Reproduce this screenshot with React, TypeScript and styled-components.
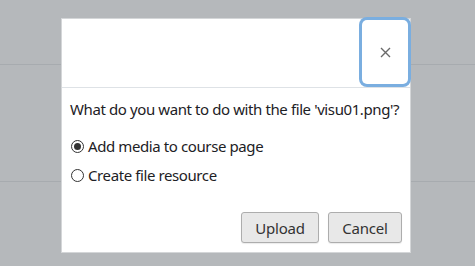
import React, { useState } from "react";
import styled, { createGlobalStyle } from "styled-components";

const Global = createGlobalStyle`
  html, body { margin: 0; padding: 0; }
  body { width: 475px; height: 266px; overflow: hidden; background: #b5b8bb; font-family: "Noto Sans", "Open Sans", sans-serif; }
`;

const Page = styled.div`
  position: relative;
  width: 475px;
  height: 266px;
  background: #b5b8bb;
  display: flex;
  flex-direction: column;
`;

const Rule = styled.div<{ $top: number }>`
  margin-top: ${(p) => p.$top}px;
  height: 1px;
  background: #a7abaf;
`;

const Dialog = styled.div`
  position: absolute;
  left: 61px;
  top: 18px;
  width: 350px;
  height: 235px;
  box-sizing: border-box;
  background: #fff;
  border: 1px solid #d4d6d8;
  display: flex;
  flex-direction: column;
`;

const Header = styled.div`
  height: 68px;
  border-bottom: 1px solid #dee2e6;
  display: flex;
  justify-content: flex-end;
  align-items: flex-start;
`;

const Close = styled.button`
  margin: 1px 2px 0 0;
  width: 46px;
  height: 64px;
  border: none;
  background: #fff;
  border-radius: 5px;
  box-shadow: 0 0 0 3px #7aaee0;
  color: #6a6a6a;
  padding: 0;
  display: flex;
  align-items: center;
  justify-content: center;
  cursor: pointer;
`;

const Body = styled.div`
  padding: 10px 8px 0 8px;
  color: #1d2125;
  font-size: 15px;
  line-height: 22px;
  letter-spacing: -0.4px;
  flex: 1;
  display: flex;
  flex-direction: column;
`;

const Question = styled.div`
  white-space: nowrap;
`;

const Options = styled.div`
  margin-top: 15px;
  display: flex;
  flex-direction: column;
  gap: 7px;
`;

const Option = styled.label`
  display: flex;
  align-items: center;
  gap: 4px;
  cursor: pointer;
`;

const Radio = styled.input`
  appearance: none;
  margin: 0 0 0 1px;
  width: 13px;
  height: 13px;
  border: 1px solid #333;
  border-radius: 50%;
  box-sizing: border-box;
  background: #fff;
  display: grid;
  place-items: center;
  &:checked::after {
    content: "";
    width: 7px;
    height: 7px;
    border-radius: 50%;
    background: #333;
  }
`;

const Footer = styled.div`
  margin-top: auto;
  padding: 0 8px 9px 0;
  display: flex;
  justify-content: flex-end;
  gap: 9px;
`;

const Btn = styled.button<{ $w: number }>`
  width: ${(p) => p.$w}px;
  height: 31px;
  border: 1px solid #adadad;
  border-radius: 3px;
  background: #e8e8e8;
  box-shadow: 0 1px 1px rgba(0, 0, 0, 0.08);
  color: #333;
  font-family: "Noto Sans", "Open Sans", sans-serif;
  font-size: 15px;
  letter-spacing: -0.2px;
  padding: 0;
  cursor: pointer;
`;

export default function App() {
  const [choice, setChoice] = useState("media");
  return (
    <>
      <Global />
      <Page>
        <Rule $top={64} />
        <Rule $top={116} />
        <Dialog>
          <Header>
            <Close aria-label="Close">
              <svg width="11" height="11" viewBox="0 0 11 11">
                <path d="M1 1L10 10M10 1L1 10" stroke="#6a6a6a" strokeWidth="1.4" />
              </svg>
            </Close>
          </Header>
          <Body>
            <Question>What do you want to do with the file 'visu01.png'?</Question>
            <Options>
              <Option>
                <Radio type="radio" name="act" checked={choice === "media"} onChange={() => setChoice("media")} />
                Add media to course page
              </Option>
              <Option>
                <Radio type="radio" name="act" checked={choice === "file"} onChange={() => setChoice("file")} />
                Create file resource
              </Option>
            </Options>
          </Body>
          <Footer>
            <Btn $w={78}>Upload</Btn>
            <Btn $w={74}>Cancel</Btn>
          </Footer>
        </Dialog>
      </Page>
    </>
  );
}
